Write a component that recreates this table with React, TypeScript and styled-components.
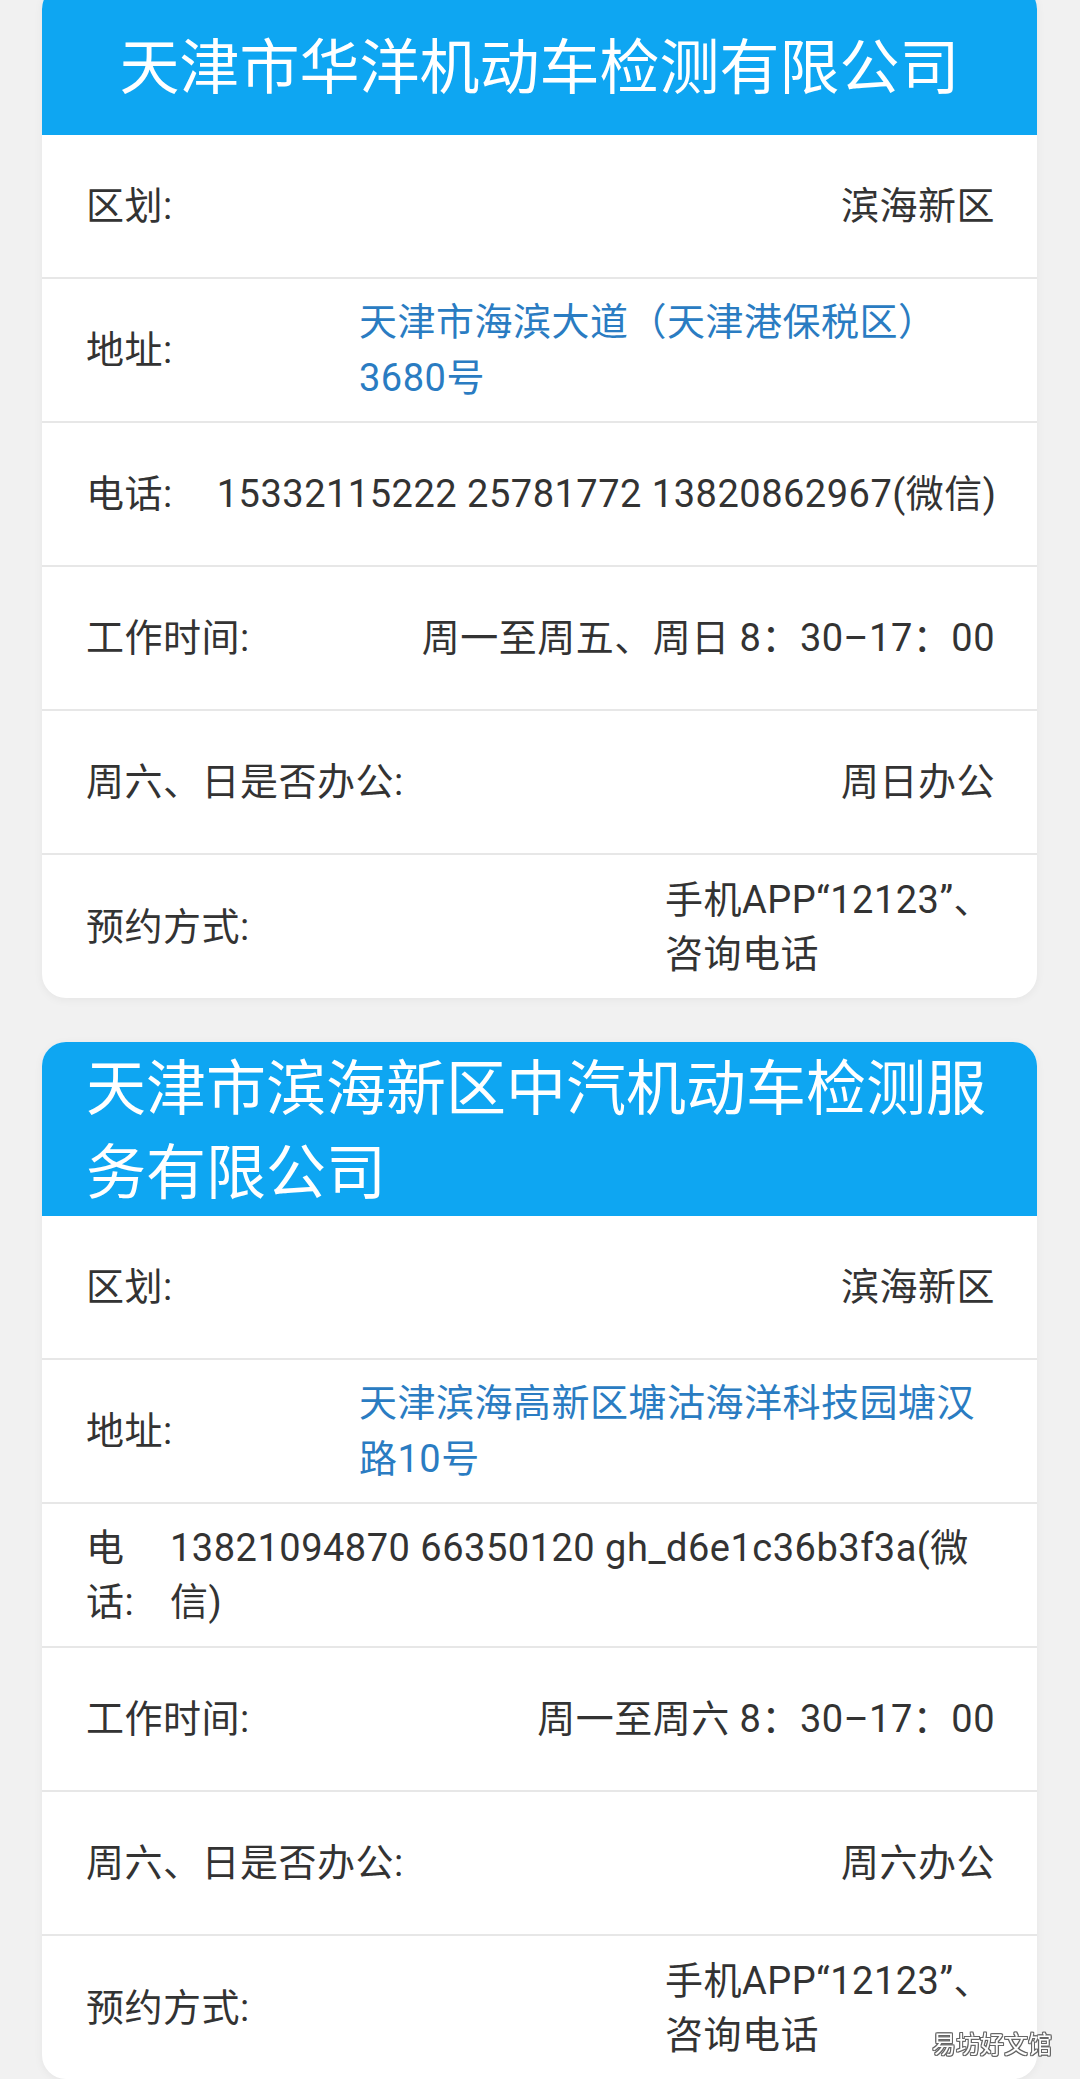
import React from 'react'
import styled, { createGlobalStyle } from 'styled-components'

const FONT = `Roboto, "Noto Sans CJK SC", sans-serif`

const GlobalStyle = createGlobalStyle`
    html, body {
        margin: 0;
        padding: 0;
        background: #f1f1f1;
    }
    body {
        font-family: ${ FONT };
        -webkit-font-smoothing: antialiased;
    }
`

type ValueKind = 'right' | 'block' | 'fill' | 'nowrap';

interface InfoRow {
    label: string;
    value: string;
    kind: ValueKind;
    link?: boolean;
    labelWidth?: number;
    valueWidth?: number;
}

interface Station {
    name: string;
    titleAlign: 'center' | 'left';
    titlePad: string;
    rows: InfoRow[];
}

const stations: Station[] = [
    {
        name: '天津市华洋机动车检测有限公司',
        titleAlign: 'center',
        titlePad: '42px 44px 24px',
        rows: [
            { label: '区划:', value: '滨海新区', kind: 'right' },
            { label: '地址:', value: '天津市海滨大道（天津港保税区）3680号', kind: 'block', link: true, valueWidth: 636 },
            { label: '电话:', value: '15332115222 25781772 13820862967(微信)', kind: 'nowrap' },
            { label: '工作时间:', value: '周一至周五、周日 8：30–17：00', kind: 'right' },
            { label: '周六、日是否办公:', value: '周日办公', kind: 'right' },
            { label: '预约方式:', value: '手机APP“12123”、咨询电话', kind: 'block', valueWidth: 330 },
        ],
    },
    {
        name: '天津市滨海新区中汽机动车检测服务有限公司',
        titleAlign: 'left',
        titlePad: '6px 44px 0',
        rows: [
            { label: '区划:', value: '滨海新区', kind: 'right' },
            { label: '地址:', value: '天津滨海高新区塘沽海洋科技园塘汉路10号', kind: 'block', link: true, valueWidth: 636 },
            { label: '电话:', value: '13821094870 66350120 gh_d6e1c36b3f3a(微信)', kind: 'fill', labelWidth: 40 },
            { label: '工作时间:', value: '周一至周六 8：30–17：00', kind: 'right' },
            { label: '周六、日是否办公:', value: '周六办公', kind: 'right' },
            { label: '预约方式:', value: '手机APP“12123”、咨询电话', kind: 'block', valueWidth: 330 },
        ],
    },
]

const Page = styled.div`
    display: flex;
    flex-direction: column;
    gap: 44px;
    padding: 0 43px 0 42px;
    margin-top: -15px;
`

const Card = styled.section`
    background: #fff;
    border-radius: 24px;
    overflow: hidden;
    box-shadow: 0 2px 10px rgba(0, 0, 0, 0.05);
`

const Header = styled.h1<{ $align: string; $pad: string }>`
    margin: 0;
    background: #0ea6f2;
    color: #fff;
    font-weight: 400;
    font-size: 60px;
    line-height: 84px;
    text-align: ${ p => p.$align };
    padding: ${ p => p.$pad };
`

const Row = styled.div`
    display: flex;
    align-items: center;
    gap: 44px;
    min-height: 142px;
    padding: 0 42px 0 44px;
    border-bottom: 2px solid #e7e7e7;
    font-size: 38px;
    letter-spacing: 0.5px;
    color: #333;

    &:last-child {
        border-bottom: none;
        min-height: 143px;
    }
`

const Label = styled.div<{ $width?: number }>`
    flex: 0 0 auto;
    width: ${ p => p.$width ? `${ p.$width }px` : 'auto' };
    line-height: 54px;
`

const Value = styled.div<{ $kind: ValueKind; $link?: boolean; $width?: number }>`
    color: ${ p => p.$link ? '#2a7cc2' : '#333' };
    line-height: ${ p => p.$link ? 56 : 54 }px;
    margin-left: ${ p => p.$kind === 'fill' ? 0 : 'auto' };
    flex: ${ p => p.$kind === 'fill' ? '1 1 0' : '0 0 auto' };
    min-width: 0;
    width: ${ p => p.$width ? `${ p.$width }px` : 'auto' };
    white-space: ${ p => (p.$kind === 'nowrap' || p.$kind === 'right') ? 'nowrap' : 'normal' };
    text-align: ${ p => p.$kind === 'right' ? 'right' : 'left' };
`

const Watermark = styled.div`
    position: fixed;
    right: 28px;
    bottom: 20px;
    font-size: 24px;
    line-height: 28px;
    color: #fff;
    text-shadow:
        1px 0 0 #666, -1px 0 0 #666, 0 1px 0 #666, 0 -1px 0 #666,
        1px 1px 0 #666, -1px -1px 0 #666, 1px -1px 0 #666, -1px 1px 0 #666;
`

const StationCard: React.FC<{ station: Station }> = ({ station }) => (
    <Card>
        <Header $align={ station.titleAlign } $pad={ station.titlePad }>
            { station.name }
        </Header>
        { station.rows.map((row, i) => (
            <Row key={ i }>
                <Label $width={ row.labelWidth }>{ row.label }</Label>
                <Value $kind={ row.kind } $link={ row.link } $width={ row.valueWidth }>{ row.value }</Value>
            </Row>
        )) }
    </Card>
)

export default function App() {
    return (
        <>
            <GlobalStyle />
            <Page>
                { stations.map((s) => <StationCard key={ s.name } station={ s } />) }
            </Page>
            <Watermark>易坊好文馆</Watermark>
        </>
    )
}
